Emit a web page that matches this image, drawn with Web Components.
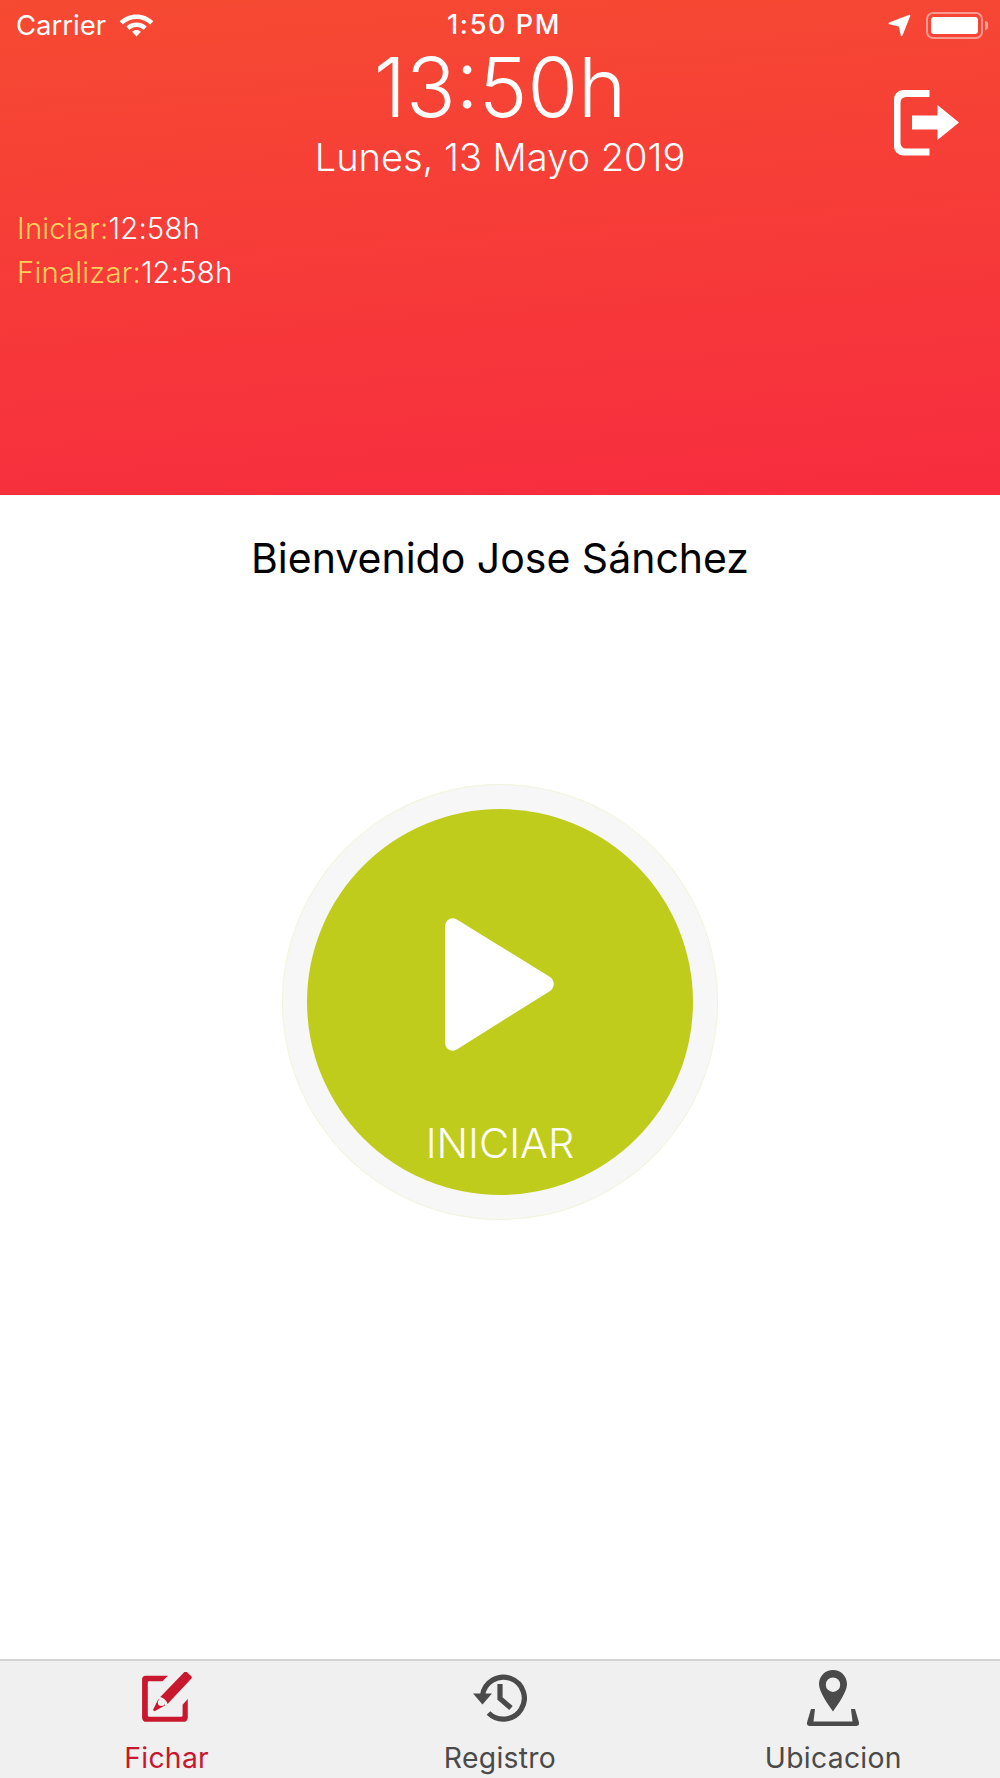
<!DOCTYPE html>
<html lang="es">
<head>
<meta charset="utf-8">
<title>Fichar</title>
<style>
  html, body { margin: 0; padding: 0; height: 100%; background: #fff; }
  body { font-family: Inter, "Liberation Sans", sans-serif; }
  app-screen { height: 1778px; }
</style>
</head>
<body>
<app-screen>
  <clock-header slot="header" time="13:50h" date="Lunes, 13 Mayo 2019">
    <time-row label="Iniciar:" value="12:58h"></time-row>
    <time-row label="Finalizar:" value="12:58h"></time-row>
  </clock-header>
  <welcome-text slot="welcome">Bienvenido Jose Sánchez</welcome-text>
  <start-button slot="main">INICIAR</start-button>
  <tab-bar slot="tabs">
    <tab-item active label="Fichar">
      <svg width="54" height="54" viewBox="1 1 52 52" fill="#c9182d">
        <path d="M6.500 4.500H28L22.500 10H9.500a1 1 0 0 0-1 1V43a1 1 0 0 0 1 1H41a1 1 0 0 0 1-1V32.500l5-5.500V45a4 4 0 0 1-4 4H7a4 4 0 0 1-4-4V8a3.500 3.500 0 0 1 3.500-3.500z"/>
        <path d="M43.500 1.200a2 2 0 0 1 2.700 0l4 3.600a2 2 0 0 1 .1 2.800L27.500 31.800a10 10 0 0 0-7-6.800zM18.500 27.500a6 6 0 0 1 6.500 5.800L15 38.800l-1.500-1.300z"/>
        <circle cx="21.600" cy="30.300" r="3.400" fill="#f0f0f0"/>
      </svg>
    </tab-item>
    <tab-item label="Registro">
      <svg width="54" height="50" viewBox="1 1 54 50" fill="none">
        <path d="M10.500 22.500A21 21 0 1 1 16.500 40" stroke="#4a4a4a" stroke-width="5.200"/>
        <path d="M1 20.500H20L10.500 31.500z" fill="#4a4a4a"/>
        <path d="M28 11V25.500L39 35" stroke="#4a4a4a" stroke-width="5.200"/>
      </svg>
    </tab-item>
    <tab-item label="Ubicacion">
      <svg width="54" height="58" viewBox="0 0 54 58" fill="#4a4a4a">
        <path fill-rule="evenodd" d="M27 0C34.800 0 41 6.200 41 14C41 22 32.500 33.500 27 41.500C21.500 33.500 13 22 13 14C13 6.200 19.200 0 27 0zM27 7.500A7.200 7.200 0 1 0 27 21.900A7.200 7.200 0 1 0 27 7.500z"/>
        <path d="M5 39H9L7.500 51.500H46.500L45 39H49L53 52.500A3 3 0 0 1 50.500 56H3.500A3 3 0 0 1 1 52.500z"/>
      </svg>
    </tab-item>
  </tab-bar>
</app-screen>

<script>
class AppScreen extends HTMLElement {
  connectedCallback() {
    this.attachShadow({ mode: 'open' });
    this.shadowRoot.innerHTML = `
      <style>
        :host { display: flex; flex-direction: column; background: #fff; }
        .welcome { display: flex; justify-content: center; padding-top: 39px; }
        .main { flex: 1; display: flex; justify-content: center; padding-top: 202px; }
      </style>
      <slot name="header"></slot>
      <div class="welcome"><slot name="welcome"></slot></div>
      <div class="main"><slot name="main"></slot></div>
      <slot name="tabs"></slot>
    `;
  }
}

class StatusBar extends HTMLElement {
  connectedCallback() {
    this.attachShadow({ mode: 'open' });
    this.shadowRoot.innerHTML = `
      <style>
        :host { display: grid; grid-template-columns: 1fr auto 1fr; align-items: center; height: 50px; padding: 0 12px 0 16px; color: #fff; font: 400 27.500px/32px Inter, sans-serif; }
        .left { display: flex; align-items: center; gap: 13px; }
        .time { font-weight: 500; font-size: 27px; letter-spacing: 1.600px; margin-left: 4px; }
        .right { display: flex; align-items: center; justify-content: flex-end; gap: 15px; }
        .battery { display: flex; align-items: center; gap: 2px; }
        .shell { box-sizing: border-box; width: 57px; height: 27px; padding: 3px; border: 2px solid rgba(255,255,255,.45); border-radius: 7px; }
        .level { height: 100%; background: #fff; border-radius: 3px; }
        .cap { width: 3px; height: 9px; background: rgba(255,255,255,.5); border-radius: 0 3px 3px 0; }
      </style>
      <div class="left">
        <span>Carrier</span>
        <svg width="35" height="25" viewBox="0 0 35 25" fill="#fff">
          <path d="M17.500 1.500C24 1.500 29.900 4 34.300 8.200L31.200 11.500C27.600 8 22.800 6 17.500 6S7.400 8 3.800 11.500L.7 8.200C5.100 4 11 1.500 17.500 1.500z"/>
          <path d="M17.500 9.500C21.400 9.500 25 11 27.700 13.600L24.600 16.900C22.700 15 20.200 14 17.500 14S12.300 15 10.400 16.900L7.300 13.600C10 11 13.600 9.500 17.500 9.500z"/>
          <path d="M17.500 17C19.200 17 20.700 17.600 21.900 18.800L17.500 23.600L13.100 18.800C14.300 17.600 15.800 17 17.500 17z"/>
        </svg>
      </div>
      <span class="time">1:50 PM</span>
      <div class="right">
        <svg width="23" height="23" viewBox="0 0 23 23" fill="#fff"><path d="M21.300.7C22 .5 22.500 1 22.300 1.700L14.500 21.500C14.200 22.400 13 22.300 12.800 21.400L10.800 12.500L1.300 10.300C.4 10.100.3 8.900 1.200 8.600z"/></svg>
        <div class="battery"><div class="shell"><div class="level"></div></div><div class="cap"></div></div>
      </div>
    `;
  }
}

class ClockHeader extends HTMLElement {
  connectedCallback() {
    this.attachShadow({ mode: 'open' });
    this.shadowRoot.innerHTML = `
      <style>
        :host { display: block; position: relative; box-sizing: border-box; height: 495px; color: #fff; background: linear-gradient(176deg, #f64a32 0%, #f72c3f 100%); }
        .clock { display: flex; flex-direction: column; align-items: center; }
        .time { font-size: 82px; font-weight: 340; line-height: 76px; }
        .date { font-size: 38px; font-weight: 340; line-height: 46px; margin-top: 8px; }
        .rows { display: flex; flex-direction: column; gap: 11px; padding: 32px 0 0 17px; }
        .logout { position: absolute; top: 88px; right: 40px; }
      </style>
      <status-bar></status-bar>
      <div class="clock">
        <div class="time">${this.getAttribute('time')}</div>
        <div class="date">${this.getAttribute('date')}</div>
      </div>
      <div class="rows"><slot></slot></div>
      <svg class="logout" width="67" height="68" viewBox="0 0 67 68" fill="#fff">
        <path d="M36.500 2V9H13a5.500 5.500 0 0 0-5.500 5.500V55a5.500 5.500 0 0 0 5.500 5.500H36.500V67.500H10A9 9 0 0 1 1 58.500V11A9 9 0 0 1 10 2z"/>
        <path d="M19 27.500H44.500V17L66 34.500L44.500 52V41.500H19z"/>
      </svg>
    `;
  }
}

class TimeRow extends HTMLElement {
  connectedCallback() {
    this.attachShadow({ mode: 'open' });
    this.shadowRoot.innerHTML = `
      <style>
        :host { display: block; font-size: 29.300px; font-weight: 340; line-height: 33px; color: #fff; letter-spacing: .2px; }
        .label { color: #fdd15c; }
      </style>
      <span class="label">${this.getAttribute('label')}</span><span>${this.getAttribute('value')}</span>
    `;
  }
}

class WelcomeText extends HTMLElement {
  connectedCallback() {
    this.attachShadow({ mode: 'open' });
    this.shadowRoot.innerHTML = `
      <style>
        :host { display: block; font-size: 41px; font-weight: 400; line-height: 48px; color: #000; }
      </style>
      <slot></slot>
    `;
  }
}

class StartButton extends HTMLElement {
  connectedCallback() {
    this.attachShadow({ mode: 'open' });
    this.shadowRoot.innerHTML = `
      <style>
        :host { display: block; width: 436px; height: 436px; }
        .ring { box-sizing: border-box; width: 100%; height: 100%; padding: 25px; border-radius: 50%; background: #f7f7f7; box-shadow: inset 0 0 0 1px #f1f5dc; }
        .disc { display: flex; flex-direction: column; align-items: center; height: 100%; border-radius: 50%; background: #c0cc1b; color: #fff; }
        svg { margin-top: 109px; margin-right: 1px; }
        .label { margin-top: 70px; font-size: 41.500px; font-weight: 340; line-height: 44px; }
      </style>
      <div class="ring">
        <div class="disc">
          <svg width="110" height="133" viewBox="0 0 112 134" preserveAspectRatio="none" fill="#fff">
            <path d="M0 9C0 2 6-2 12 1.500L107 59.500C112 63 112 70 107 73.500L12 132.500C6 136 0 132 0 125z"/>
          </svg>
          <div class="label"><slot></slot></div>
        </div>
      </div>
    `;
  }
}

class TabBar extends HTMLElement {
  connectedCallback() {
    this.attachShadow({ mode: 'open' });
    this.shadowRoot.innerHTML = `
      <style>
        :host { display: grid; grid-template-columns: repeat(3, 1fr); box-sizing: border-box; height: 119px; background: #f0f0f0; border-top: 2px solid #d4d4d4; }
      </style>
      <slot></slot>
    `;
  }
}

class TabItem extends HTMLElement {
  connectedCallback() {
    this.attachShadow({ mode: 'open' });
    this.shadowRoot.innerHTML = `
      <style>
        :host { display: flex; flex-direction: column; align-items: center; color: #4a4a4a; }
        :host([active]) { color: #c9182d; }
        .icon { display: flex; align-items: center; justify-content: center; height: 66px; padding-top: 5px; }
        .label { font-size: 28.300px; line-height: 34px; letter-spacing: .3px; margin-top: 9px; }
      </style>
      <div class="icon"><slot></slot></div>
      <div class="label">${this.getAttribute('label')}</div>
    `;
  }
}

customElements.define('status-bar', StatusBar);
customElements.define('time-row', TimeRow);
customElements.define('clock-header', ClockHeader);
customElements.define('welcome-text', WelcomeText);
customElements.define('start-button', StartButton);
customElements.define('tab-item', TabItem);
customElements.define('tab-bar', TabBar);
customElements.define('app-screen', AppScreen);
</script>
</body>
</html>
